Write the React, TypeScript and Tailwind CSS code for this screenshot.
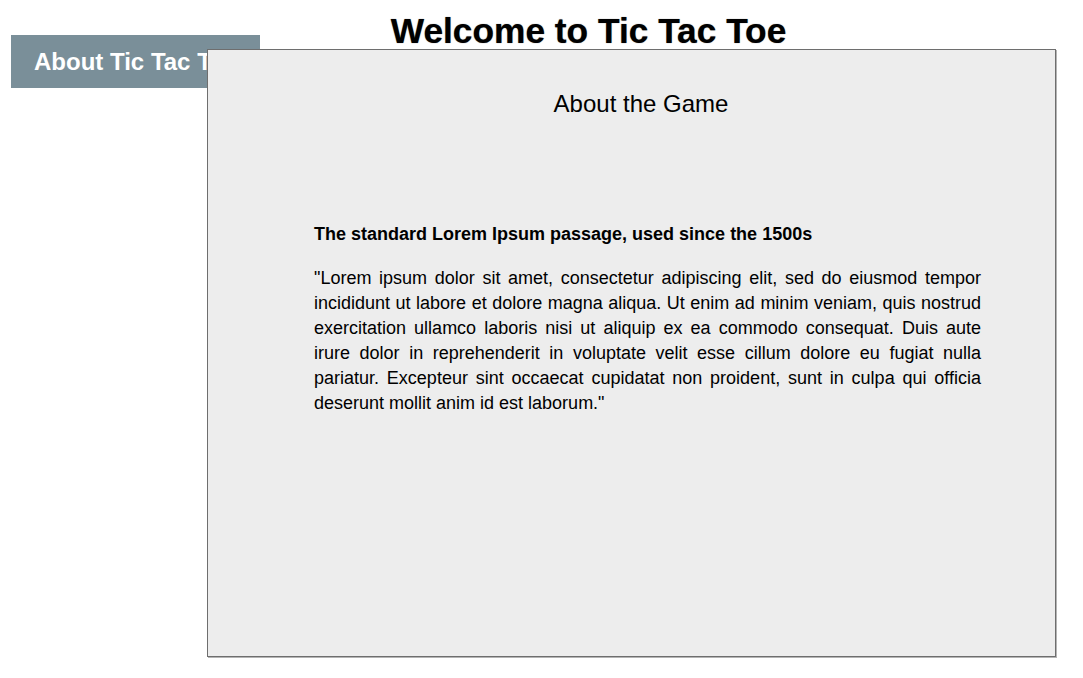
import React from 'react'

const lorem =
    '"Lorem ipsum dolor sit amet, consectetur adipiscing elit, sed do eiusmod tempor incididunt ut labore et dolore magna aliqua. Ut enim ad minim veniam, quis nostrud exercitation ullamco laboris nisi ut aliquip ex ea commodo consequat. Duis aute irure dolor in reprehenderit in voluptate velit esse cillum dolore eu fugiat nulla pariatur. Excepteur sint occaecat cupidatat non proident, sunt in culpa qui officia deserunt mollit anim id est laborum."'

const App = () => {
    return (
        <div className="relative h-[678px] w-full overflow-hidden bg-white font-['Liberation_Sans',Arial,sans-serif] text-black">
            {/* Top row: sidebar tab + title */}
            <div className="flex items-start">
                <div className="ml-[11px] mt-[35px] h-[53px] w-[249px] shrink-0 overflow-hidden whitespace-nowrap bg-[#7a8f99] px-[23px] text-[24px] font-bold leading-[53px] text-white">
                    About Tic Tac Toe
                </div>
                <h1 className="mt-[11px] flex-1 pr-[166px] text-center text-[35.3px] font-bold leading-[40px] [text-shadow:0_0_1px_rgba(0,0,0,0.6)]">
                    Welcome to Tic Tac Toe
                </h1>
            </div>

            {/* About modal */}
            <div className="absolute left-[207px] top-[49px] h-[608px] w-[849px] border border-[#6e6e6e] bg-[#ededed] shadow-[1px_1px_0_#b4b4b4]">
                <h2 className="mt-[40px] pl-[19px] text-center text-[24px] leading-[28px] font-normal">
                    About the Game
                </h2>
                <div className="ml-[106px] mr-[74px] mt-[104px]">
                    <h3 className="text-[18px] font-bold leading-[25px]">
                        The standard Lorem Ipsum passage, used since the 1500s
                    </h3>
                    <p className="mt-[19px] text-justify text-[18px] leading-[25px]">{lorem}</p>
                </div>
            </div>
        </div>
    )
}

export default App
